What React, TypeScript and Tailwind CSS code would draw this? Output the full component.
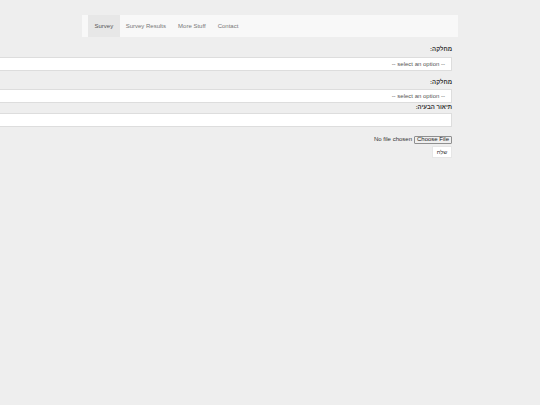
import React from "react";

export default function App() {
  const font = { fontFamily: '"Liberation Sans", Arial, sans-serif' };
  return (
    <div className="min-h-[405px] w-[540px] bg-[#eeeeee] overflow-hidden" style={font}>
      <div className="pt-[15px] pl-[82px]">
        <nav className="flex h-[22px] w-[376px] bg-[#f8f8f8] pl-[6px] text-[6px] text-[#777777]">
          <a className="flex items-center bg-[#e7e7e7] px-[6.5px] text-[#555555]">Survey</a>
          <a className="flex items-center px-[6px]">Survey Results</a>
          <a className="flex items-center px-[6px]">More Stuff</a>
          <a className="flex items-center px-[6px]">Contact</a>
        </nav>
      </div>
      <form dir="rtl" className="mr-[88px] flex flex-col items-start text-[6px] text-[#333333]">
        <label className="mt-[8px] h-[8px] font-bold leading-[8px]">מחלקה:</label>
        <div className="mt-[4px] flex h-[14px] w-[460px] items-center border border-[#dddddd] bg-white pr-[6px] text-[#555555]">
          -- select an option --
        </div>
        <label className="mt-[7px] h-[8px] font-bold leading-[8px]">מחלקה:</label>
        <div className="mt-[3px] flex h-[14px] w-[460px] items-center border border-[#dddddd] bg-white pr-[6px] text-[#555555]">
          -- select an option --
        </div>
        <label className="h-[8px] font-bold leading-[8px]">תיאור הבעיה:</label>
        <div className="mt-[2px] h-[14px] w-[460px] border border-[#dddddd] bg-white"></div>
        <div dir="ltr" className="mt-[8px] flex items-center gap-[2px] self-start">
          <span className="text-[#333333]">No file chosen</span>
          <span className="flex h-[8px] items-center rounded-[1px] border border-[#8f8f8f] bg-[#efefef] px-[2px] text-[6px] text-[#222222]">
            Choose File
          </span>
        </div>
        <button
          type="button"
          className="mt-[2px] flex h-[12px] w-[20px] items-center justify-center border border-[#e6e6e6] bg-white text-[5.5px] text-[#333333]"
        >
          שלח
        </button>
      </form>
    </div>
  );
}
